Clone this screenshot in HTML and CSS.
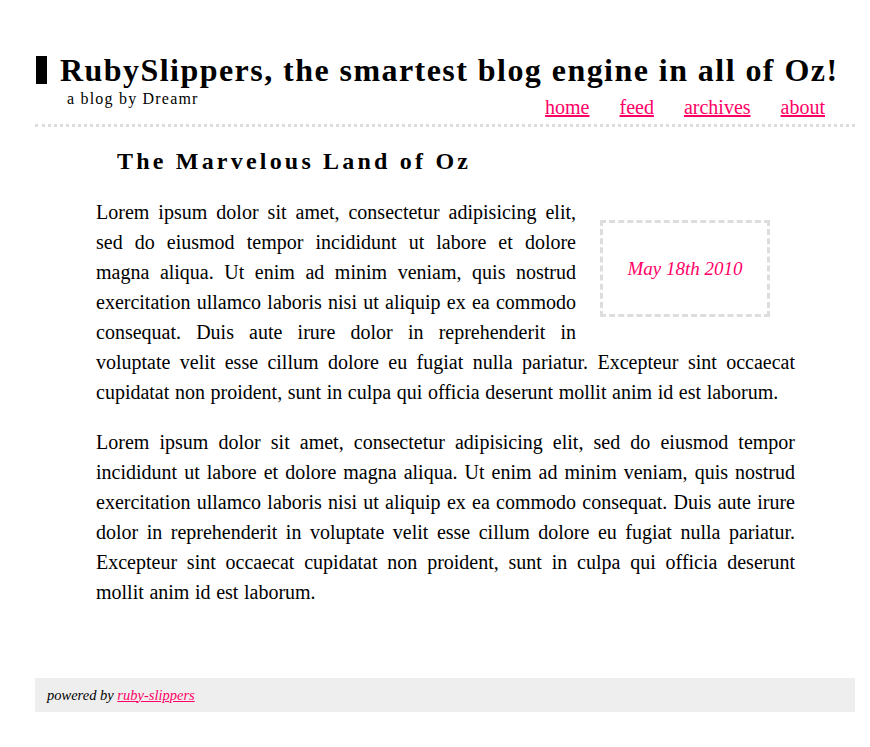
FILE: index.html
```html
<!DOCTYPE html>
<html>
<head>
<meta charset="utf-8">
<link rel="stylesheet" href="styles.css">
</head>
<body>
<div class="page">
  <header class="masthead">
    <h1 class="site-title">RubySlippers, the smartest blog engine in all of Oz!</h1>
    <div class="masthead-row">
      <div class="tagline">a blog by Dreamr</div>
      <nav class="nav">
        <a href="#">home</a>
        <a href="#">feed</a>
        <a href="#">archives</a>
        <a href="#">about</a>
      </nav>
    </div>
  </header>
  <article class="article">
    <h2 class="article-title">The Marvelous Land of Oz</h2>
    <div class="article-body">
      <div class="date">May 18th 2010</div>
      <p>Lorem ipsum dolor sit amet, consectetur adipisicing elit, sed do eiusmod tempor incididunt ut labore et dolore magna aliqua. Ut enim ad minim veniam, quis nostrud exercitation ullamco laboris nisi ut aliquip ex ea commodo consequat. Duis aute irure dolor in reprehenderit in voluptate velit esse cillum dolore eu fugiat nulla pariatur. Excepteur sint occaecat cupidatat non proident, sunt in culpa qui officia deserunt mollit anim id est laborum.</p>
      <p>Lorem ipsum dolor sit amet, consectetur adipisicing elit, sed do eiusmod tempor incididunt ut labore et dolore magna aliqua. Ut enim ad minim veniam, quis nostrud exercitation ullamco laboris nisi ut aliquip ex ea commodo consequat. Duis aute irure dolor in reprehenderit in voluptate velit esse cillum dolore eu fugiat nulla pariatur. Excepteur sint occaecat cupidatat non proident, sunt in culpa qui officia deserunt mollit anim id est laborum.</p>
    </div>
  </article>
  <footer class="footer">
    <span class="powered">powered by <a href="#">ruby-slippers</a></span>
  </footer>
</div>
</body>
</html>
```

FILE: styles.css
```css
html, body {
  margin: 0;
  padding: 0;
  background: #fff;
}
body {
  font-family: "Liberation Serif", "DejaVu Serif", serif;
  color: #000;
}
.page {
  width: 820px;
  margin: 0 0 0 35px;
  padding-top: 56px;
}
.masthead {
  border-bottom: 3px dotted #ddd;
  padding-bottom: 6px;
}
.site-title {
  margin: 0 0 0 1px;
  font-size: 32px;
  line-height: 28px;
  font-weight: bold;
  border-left: 11px solid #000;
  padding-left: 13px;
  letter-spacing: 1.45px;
  white-space: nowrap;
}
.masthead-row {
  display: flex;
  justify-content: space-between;
}
.tagline {
  margin-top: 6px;
  font-size: 16px;
  letter-spacing: 1.2px;
  padding-left: 32px;
  line-height: 18px;
  align-self: flex-start;
}
.nav {
  display: flex;
  gap: 30px;
  padding-top: 12px;
  padding-right: 30px;
  font-size: 20px;
  line-height: 22px;
}
.nav a, .footer a {
  color: #ff0066;
}
.article {
  padding: 0 60px 0 61px;
}
.article-title {
  margin: 19px 0 0 21px;
  font-size: 24px;
  line-height: 30px;
  letter-spacing: 3.2px;
  font-weight: bold;
}
.article-body {
  margin-top: 21px;
}
.article-body p {
  margin: 0 0 20px;
  font-size: 20px;
  line-height: 30px;
  word-spacing: 0.6px;
  text-align: justify;
}
.date {
  float: right;
  width: 164px;
  height: 91px;
  margin: 23px 25px 10px 24px;
  border: 3px dashed #ddd;
  display: flex;
  align-items: center;
  justify-content: center;
  font-style: italic;
  font-size: 19px;
  word-spacing: 0;
  color: #ff0066;
}
.footer {
  margin-top: 71px;
  background: #eee;
  height: 34px;
  display: flex;
  align-items: center;
  padding-left: 12px;
}
.powered {
  font-style: italic;
  font-size: 14.5px;
}
```
